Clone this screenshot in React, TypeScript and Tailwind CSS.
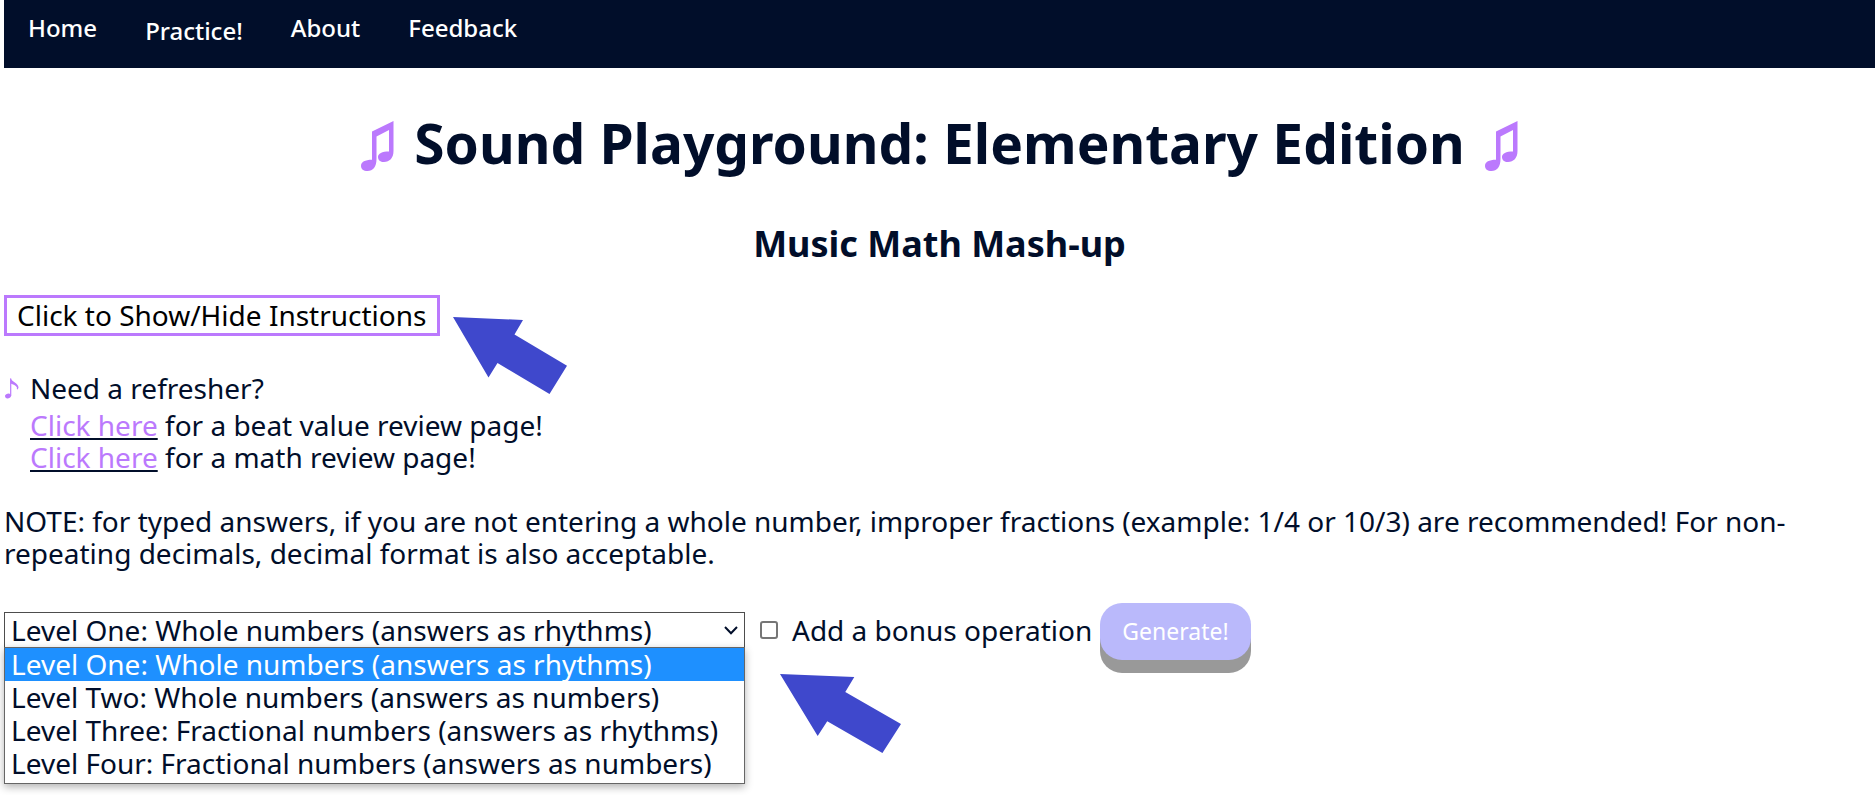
import { useState } from "react";

const levels = [
  "Level One: Whole numbers (answers as rhythms)",
  "Level Two: Whole numbers (answers as numbers)",
  "Level Three: Fractional numbers (answers as rhythms)",
  "Level Four: Fractional numbers (answers as numbers)",
];

function BeamedNotes() {
  return (
    <svg width="33" height="50" viewBox="0 0 33 50" fill="#bb79fd" className="mb-1" aria-hidden="true">
      <path
        fillRule="evenodd"
        d="M11 10.500 32.500 0V30C32.500 37 28.500 41 23 41 19.300 41 17 39 17 36 17 32.500 21 30.500 28 30.500V9L15.500 15.500V38C15.500 46 12 50 6.500 50 2.500 50 0 48 0 45 0 41 4 38.800 11 38.800Z"
      />
    </svg>
  );
}

function EighthNote() {
  return (
    <svg width="15" height="21" viewBox="-1 0 15 21" fill="none" aria-hidden="true">
      <ellipse cx="3" cy="18" rx="3" ry="2.300" transform="rotate(-15 3 18)" fill="#bb79fd" />
      <path d="M5.700 18V0.500" stroke="#bb79fd" strokeWidth="1.200" />
      <path d="M5.500 0C6.500 4 13.500 5 13.500 9.500L12.800 11.500 11.800 11C13 8.500 9 6.500 5.500 5.500Z" fill="#bb79fd" />
    </svg>
  );
}

function Arrow({ className }: { className: string }) {
  return (
    <svg
      viewBox="0 0 114 77"
      preserveAspectRatio="none"
      fill="#3f48cc"
      className={`pointer-events-none absolute ${className}`}
      aria-hidden="true"
    >
      <path d="M0 0 70 3 61.500 17.500 114 48.800 96.500 77 44.500 46 35.500 60.500Z" />
    </svg>
  );
}

export default function App() {
  const [level, setLevel] = useState(levels[0]);
  const [bonus, setBonus] = useState(false);

  return (
    <div className="min-h-screen bg-white pl-1 font-['Noto_Sans',sans-serif] text-[28px] leading-8 text-[#010e2a]">
      <nav className="flex h-[68px] items-start gap-12 bg-[#010e2a] px-6 text-2xl leading-9 font-medium text-white">
        <a href="#home" className="py-[10px]">Home</a>
        <button type="button" className="py-[13px]">Practice!</button>
        <a href="#about" className="py-[10px]">About</a>
        <a href="#feedback" className="py-[10px]">Feedback</a>
      </nav>

      <header className="text-center">
        <h1 className="mt-[43px] flex items-end justify-center gap-5 text-[55px] leading-[64px] font-bold">
          <BeamedNotes />
          Sound Playground: Elementary Edition
          <BeamedNotes />
        </h1>
        <h2 className="mt-[45px] text-4xl leading-[48px] font-bold">Music Math Mash-up</h2>
      </header>

      <main className="mt-[27px]">
        <div className="relative w-fit">
          <button type="button" className="block border-3 border-[#bb79fd] px-[10px] pt-px pb-[2px] text-black">
            Click to Show/Hide Instructions
          </button>
          <Arrow className="top-[22px] left-full ml-[13px] h-[77px] w-[114px]" />
        </div>

        <section className="mt-9">
          <div className="flex items-center gap-[11px]">
            <EighthNote />
            <p>Need a refresher?</p>
          </div>
          <ul className="mt-[5px] pl-[26px]">
            <li>
              <a href="#beats" className="text-[#bb79fd] underline decoration-[#010e2a] decoration-2 underline-offset-2">Click here</a> for a beat value review page!
            </li>
            <li>
              <a href="#math" className="text-[#bb79fd] underline decoration-[#010e2a] decoration-2 underline-offset-2">Click here</a> for a math review page!
            </li>
          </ul>
        </section>

        <p className="mt-8 pr-4">
          NOTE: for typed answers, if you are not entering a whole number, improper fractions (example: 1/4 or 10/3) are recommended! For non-repeating decimals, decimal format is also acceptable.
        </p>

        <form className="mt-[34px] flex items-center" onSubmit={(e) => e.preventDefault()}>
          <div className="flex items-center pb-[3px]">
            <div className="relative w-[741px] max-w-full">
              <select
                aria-label="Level"
                value={level}
                onChange={(e) => setLevel(e.target.value)}
                className="block h-9 w-full appearance-none border border-[#4d4d4d] bg-white pl-[6px] leading-8"
              >
                {levels.map((name) => (
                  <option key={name}>{name}</option>
                ))}
              </select>
              <svg width="14" height="9" viewBox="0 0 14 9" className="pointer-events-none absolute top-[14px] right-[7px]" aria-hidden="true">
                <path d="M1 1 7 7.200 13 1" fill="none" stroke="#010e2a" strokeWidth="2" />
              </svg>
              <ul
                role="listbox"
                aria-label="Levels"
                className="absolute top-[35px] left-0 z-10 w-full border border-[#666] bg-white pb-[3px] leading-[33px] shadow-[0_3px_8px_rgba(0,0,0,0.3)]"
              >
                {levels.map((name) => (
                  <li
                    key={name}
                    role="option"
                    aria-selected={name === level}
                    onClick={() => setLevel(name)}
                    className={name === level ? "bg-[#1e90ff] pl-[6px] text-white" : "pl-[6px]"}
                  >
                    {name}
                  </li>
                ))}
              </ul>
            </div>
            <div className="relative ml-[15px] flex items-center">
              <input
                id="bonus"
                type="checkbox"
                checked={bonus}
                onChange={(e) => setBonus(e.target.checked)}
                className="size-[18px] appearance-none rounded-[3px] border-2 border-[#767676] bg-white checked:bg-[#1e90ff]"
              />
              <label htmlFor="bonus" className="pl-[14px]">Add a bonus operation</label>
              <Arrow className="top-[60px] left-5 h-[79px] w-[121px]" />
            </div>
          </div>
          <button
            type="submit"
            className="ml-2 h-[57px] rounded-[22px] bg-[#bab9fb] px-[22px] pb-px text-[23px] text-white shadow-[0_13px_0_#999]"
          >
            Generate!
          </button>
        </form>
      </main>
    </div>
  );
}
